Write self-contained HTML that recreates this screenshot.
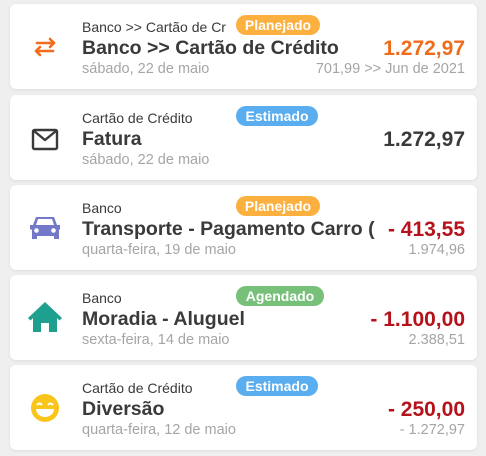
<!DOCTYPE html>
<html><head><meta charset="utf-8"><style>
body{margin:0;width:486px;height:456px;background:#efefef;font-family:"Liberation Sans",sans-serif;overflow:hidden;position:relative}
.c{position:absolute;left:10px;width:467px;height:85px;background:#fff;border-radius:6px;box-shadow:0 1px 3px rgba(0,0,0,.08)}
.s{position:absolute;left:72px;top:15px;font-size:14px;color:#3a3a3a;white-space:nowrap;width:152px;overflow:hidden}
.t{position:absolute;left:72px;top:33px;font-size:19.5px;font-weight:bold;color:#3a3a3a;white-space:nowrap;letter-spacing:0}
.d{position:absolute;left:72px;top:57px;font-size:14.5px;color:#a5a5a5;white-space:nowrap}
.b{position:absolute;left:226px;top:11px;height:20px;line-height:20px;border-radius:10px;color:#fff;font-size:14px;font-weight:bold;text-align:center}
.a{position:absolute;right:12px;top:33px;font-size:21px;font-weight:bold;color:#3a3a3a;background:#fff;padding-left:10px}
.r{position:absolute;right:12px;top:57px;font-size:14.5px;color:#a5a5a5}
.i{position:absolute;left:16px;top:26px;width:38px;height:34px}
</style></head><body>
<div class="c" style="top:4px">
<svg class="i" viewBox="0 0 38 34"><g stroke="#f26b1a" stroke-width="2.6" fill="none" stroke-linecap="round" stroke-linejoin="round"><path d="M11 13h17M24 9l4 4-4 4"/><path d="M27 21H10M14 17l-4 4 4 4"/></g></svg>
<div class="s">Banco &gt;&gt; Cartão de Cr</div>
<div class="b" style="background:#fbb040;width:84px">Planejado</div>
<div class="t">Banco &gt;&gt; Cartão de Crédito</div>
<div class="d">sábado, 22 de maio</div>
<div class="a" style="color:#f26b1a">1.272,97</div>
<div class="r">701,99 &gt;&gt; Jun de 2021</div>
</div>
<div class="c" style="top:95px">
<svg class="i" viewBox="0 0 38 34"><rect x="7" y="9" width="24" height="19" rx="1.5" fill="none" stroke="#3a3a3a" stroke-width="2.4"/><path d="M8 10l11 9 11-9" fill="none" stroke="#3a3a3a" stroke-width="2.4"/></svg>
<div class="s">Cartão de Crédito</div>
<div class="b" style="background:#5aaef0;width:82px">Estimado</div>
<div class="t">Fatura</div>
<div class="d">sábado, 22 de maio</div>
<div class="a">1.272,97</div>
</div>
<div class="c" style="top:185px">
<svg class="i" viewBox="0 0 38 34"><path d="M4 14h3l3-8h18l3 8h3v4l-1 1v9h-5v-3H11v3H6v-9l-2-1z" fill="#7378c8"/><path d="M12 8h14l2 6H10z" fill="#fff"/><circle cx="10.5" cy="19.5" r="2.3" fill="#fff"/><circle cx="27.5" cy="19.5" r="2.3" fill="#fff"/></svg>
<div class="s">Banco</div>
<div class="b" style="background:#fbb040;width:84px">Planejado</div>
<div class="t">Transporte - Pagamento Carro (</div>
<div class="d">quarta-feira, 19 de maio</div>
<div class="a" style="color:#b5121b">- 413,55</div>
<div class="r">1.974,96</div>
</div>
<div class="c" style="top:275px">
<svg class="i" viewBox="0 0 38 34"><path d="M2 17L19 1l17 16-2.5 2.5L31 17v14H23v-9h-8v9H7V17l-2.5 2.5z" fill="#1fa08f"/></svg>
<div class="s">Banco</div>
<div class="b" style="background:#77c07a;width:88px">Agendado</div>
<div class="t">Moradia - Aluguel</div>
<div class="d">sexta-feira, 14 de maio</div>
<div class="a" style="color:#b5121b">- 1.100,00</div>
<div class="r">2.388,51</div>
</div>
<div class="c" style="top:365px">
<svg class="i" viewBox="0 0 38 34"><circle cx="19" cy="17" r="14" fill="#f9c51b"/><path d="M10 18h18a9 8 0 0 1-18 0z" fill="#fff"/><path d="M11 14q2.5-3 5 0M22 14q2.5-3 5 0" stroke="#fff" stroke-width="2" fill="none"/></svg>
<div class="s">Cartão de Crédito</div>
<div class="b" style="background:#5aaef0;width:82px">Estimado</div>
<div class="t">Diversão</div>
<div class="d">quarta-feira, 12 de maio</div>
<div class="a" style="color:#b5121b">- 250,00</div>
<div class="r">- 1.272,97</div>
</div>
</body></html>
